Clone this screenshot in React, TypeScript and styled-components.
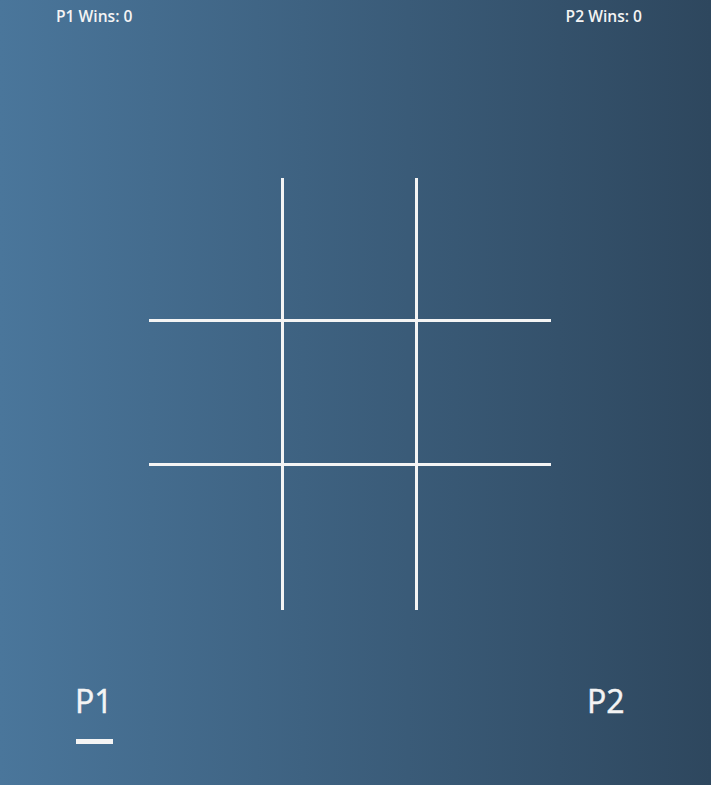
import React from "react";
import styled, { createGlobalStyle } from "styled-components";

const Global = createGlobalStyle`
  html, body { margin: 0; padding: 0; height: 100%; }
  body { font-family: "Open Sans", "Liberation Sans", sans-serif; }
  #root { height: 100%; }
`;

const Page = styled.div`
  height: 785px;
  background: linear-gradient(to right, #4a769b 0%, #2e475e 100%);
  color: #f4f4f4;
  display: flex;
  flex-direction: column;
  overflow: hidden;
`;

const ScoreBar = styled.div`
  display: flex;
  justify-content: space-between;
  padding: 7px 69px 0 56px;
`;

const Score = styled.div`
  font-size: 15.6px;
  font-weight: 600;
  line-height: 19px;
`;

const BoardArea = styled.div`
  padding: 152px 0 0 149px;
`;

const Board = styled.div`
  display: grid;
  grid-template-columns: 135px 134px 133px;
  grid-template-rows: 144px 144px 144px;
  width: 402px;
`;

const Cell = styled.div<{ $right: boolean; $bottom: boolean }>`
  border-right: ${(p) => (p.$right ? "3px solid #f4f4f4" : "none")};
  border-bottom: ${(p) => (p.$bottom ? "3px solid #f4f4f4" : "none")};
`;

const Players = styled.div`
  display: flex;
  justify-content: space-between;
  padding: 68px 86px 0 76px;
`;

const Player = styled.div`
  display: flex;
  flex-direction: column;
  align-items: flex-start;
`;

const PlayerName = styled.div`
  font-size: 32px;
  font-weight: 400;
  -webkit-text-stroke: 0.5px #f4f4f4;
  line-height: 46px;
  margin-left: -1px;
`;

const Underline = styled.div<{ $active: boolean }>`
  width: 37px;
  height: 5px;
  margin-top: 15px;
  background: ${(p) => (p.$active ? "#f4f4f4" : "transparent")};
`;

export default function App() {
  const cells = Array.from({ length: 9 }, (_, i) => i);
  return (
    <>
      <Global />
      <Page>
        <ScoreBar>
          <Score>P1 Wins: 0</Score>
          <Score>P2 Wins: 0</Score>
        </ScoreBar>
        <BoardArea>
          <Board>
            {cells.map((i) => (
              <Cell key={i} $right={i % 3 !== 2} $bottom={i < 6} />
            ))}
          </Board>
        </BoardArea>
        <Players>
          <Player>
            <PlayerName>P1</PlayerName>
            <Underline $active />
          </Player>
          <Player>
            <PlayerName>P2</PlayerName>
            <Underline $active={false} />
          </Player>
        </Players>
      </Page>
    </>
  );
}
